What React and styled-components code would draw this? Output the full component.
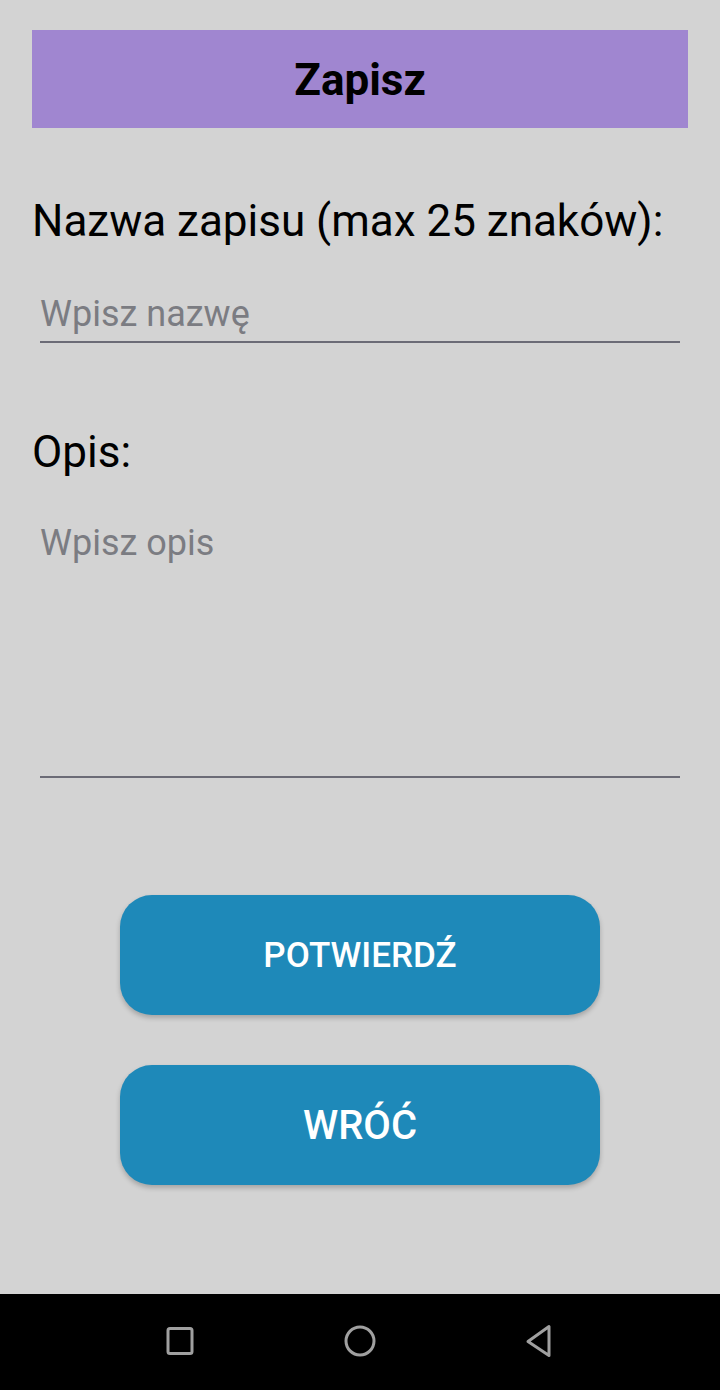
import React from "react";
import styled, { createGlobalStyle } from "styled-components";

const Global = createGlobalStyle`
  html, body { margin: 0; padding: 0; background: #d3d3d3; }
  * { box-sizing: border-box; }
  body { font-family: Roboto, "Noto Sans", sans-serif; }
`;

const Screen = styled.div`
  width: 720px;
  height: 1390px;
  display: flex;
  flex-direction: column;
  background: #d3d3d3;
`;

const Content = styled.main`
  flex: 1;
  display: flex;
  flex-direction: column;
  padding: 30px 32px 0;
`;

const TitleBar = styled.header`
  height: 98px;
  background: #a086d0;
  display: flex;
  align-items: center;
  justify-content: center;
`;

const Title = styled.h1`
  margin: 0;
  font-family: Roboto, sans-serif;
  font-weight: 700;
  font-size: 44px;
  line-height: 52px;
  color: #000;
  padding-top: 2px;
`;

const Label = styled.label`
  display: block;
  margin-top: ${(p) => p.$top}px;
  font-family: Roboto, sans-serif;
  font-weight: 400;
  font-size: 44px;
  line-height: 52px;
  color: #000;
`;

const fieldBase = `
  display: block;
  width: 640px;
  margin-left: 8px;
  border: none;
  border-bottom: 2px solid #6b6b76;
  background: transparent;
  font-family: Roboto, sans-serif;
  font-size: 36px;
  line-height: 44px;
  color: #000;
  padding: 0;
  outline: none;
  &::placeholder { color: #7b7c82; opacity: 1; }
`;

const TextInput = styled.input`
  ${fieldBase}
  margin-top: 45px;
  height: 51px;
  padding-bottom: 5px;
`;

const TextArea = styled.textarea`
  ${fieldBase}
  margin-top: 43px;
  height: 257px;
  resize: none;
  overflow: hidden;
`;

const Actions = styled.div`
  display: flex;
  flex-direction: column;
  align-items: center;
  gap: 50px;
  margin-top: 117px;
`;

const ActionButton = styled.button`
  width: 480px;
  height: 120px;
  border: none;
  border-radius: 32px;
  background: #1e89b9;
  color: #fff;
  font-family: Roboto, sans-serif;
  font-weight: 500;
  font-size: ${(p) => p.$size}px;
  padding: 0 0 ${(p) => p.$lift}px;
  box-shadow: 0 3px 5px rgba(0, 0, 0, 0.22);
  cursor: pointer;
`;

const NavBar = styled.nav`
  height: 96px;
  background: #000;
  display: flex;
  justify-content: center;
  align-items: center;
`;

const NavSlot = styled.div`
  width: 180px;
  display: flex;
  justify-content: center;
  align-items: center;
  padding-bottom: 2px;
`;

export default function App() {
  return (
    <Screen>
      <Global />
      <Content>
        <TitleBar>
          <Title>Zapisz</Title>
        </TitleBar>
        <Label $top={67}>Nazwa zapisu (max 25 znaków):</Label>
        <TextInput placeholder="Wpisz nazwę" />
        <Label $top={83}>Opis:</Label>
        <TextArea placeholder="Wpisz opis" />
        <Actions>
          <ActionButton $size={35} $lift={0}>POTWIERDŹ</ActionButton>
          <ActionButton $size={40} $lift={0}>WRÓĆ</ActionButton>
        </Actions>
      </Content>
      <NavBar>
        <NavSlot>
          <svg width="30" height="30" viewBox="0 0 30 30">
            <rect x="3" y="2.5" width="24" height="25" rx="2" fill="none" stroke="#a0a0a0" strokeWidth="3" />
          </svg>
        </NavSlot>
        <NavSlot>
          <svg width="34" height="34" viewBox="0 0 34 34">
            <circle cx="17" cy="17" r="14" fill="none" stroke="#a0a0a0" strokeWidth="3" />
          </svg>
        </NavSlot>
        <NavSlot>
          <svg width="34" height="34" viewBox="0 0 34 34">
            <path d="M26 2.5 L26 31.5 L5 17.5 Z" fill="none" stroke="#a0a0a0" strokeWidth="3" strokeLinejoin="round" />
          </svg>
        </NavSlot>
      </NavBar>
    </Screen>
  );
}
